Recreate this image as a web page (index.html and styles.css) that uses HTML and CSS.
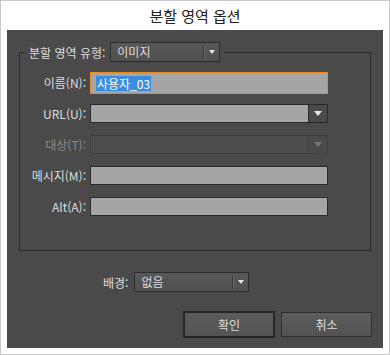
FILE: index.html
```html
<!DOCTYPE html>
<html lang="ko">
<head>
  <meta charset="UTF-8" />
  <meta name="viewport" content="width=device-width, initial-scale=1.0"/>
  <title>분할 영역 옵션</title>
  <link rel="stylesheet" href="styles.css">
</head>

<body>
  <div class="dialog">
    <div class="title">분할 영역 옵션</div>

    <div class="panel">
      <fieldset class="group">
        <legend class="group-legend">
          <span class="legend-label">분할 영역 유형:</span>
          <div class="select select-type">
            <span class="select-value">이미지</span>
            <span class="select-arrow"><span class="tri"></span></span>
          </div>
        </legend>

        <div class="form">
          <label class="label">이름(N):</label>
          <div class="field field-focus"><span class="sel">사용자_03</span></div>

          <label class="label">URL(U):</label>
          <div class="combo">
            <div class="combo-text"></div>
            <div class="combo-btn"><span class="tri tri-big"></span></div>
          </div>

          <label class="label label-off">대상(T):</label>
          <div class="combo combo-off">
            <div class="combo-text"></div>
            <div class="combo-btn"><span class="tri tri-big"></span></div>
          </div>

          <label class="label">메시지(M):</label>
          <div class="field"></div>

          <label class="label">Alt(A):</label>
          <div class="field"></div>
        </div>
      </fieldset>

      <div class="bg-row">
        <span class="label">배경:</span>
        <div class="select select-bg">
          <span class="select-value">없음</span>
          <span class="select-arrow"><span class="tri"></span></span>
        </div>
      </div>

      <div class="buttons">
        <button class="btn btn-default">확인</button>
        <button class="btn">취소</button>
      </div>
    </div>
  </div>
</body>
</html>
```

FILE: styles.css
```css
:root {
  --panel: #4a4a4a;
  --line: #2a2a2a;
  --txt: #dedede;
  --field: #a5a5a5;
  --focus: #e8891c;
  --select: #3b8de0;
}

* { box-sizing: border-box; }

body {
  margin: 0;
  background: #fff;
  font-family: "Noto Sans CJK KR", "Noto Sans", sans-serif;
  font-size: 12px;
}

.dialog {
  width: 390px;
  height: 355px;
  border: 1px solid #c8c8c8;
  padding: 0 6px 6px;
  display: flex;
  flex-direction: column;
}

.title {
  height: 29px;
  line-height: 29px;
  text-align: center;
  font-size: 15px;
  color: #222;
}

.panel {
  flex: 1;
  background: var(--panel);
  display: flex;
  flex-direction: column;
}

.group {
  margin: 12px 12px 0;
  padding: 0;
  border: 1px solid var(--line);
  min-width: 0;
}

.group-legend {
  display: flex;
  align-items: center;
  gap: 5px;
  margin-left: 5px;
  padding: 0 4px;
  color: var(--txt);
}

.form {
  display: grid;
  grid-template-columns: 66px 238px;
  grid-auto-rows: 19px;
  column-gap: 4px;
  row-gap: 12px;
  align-items: center;
  padding: 11px 0 34px;
}

.label {
  text-align: right;
  color: var(--txt);
  line-height: 19px;
  white-space: nowrap;
}

.label-off { color: #8a8a8a; }

.field {
  height: 19px;
  background: var(--field);
  border: 1px solid var(--line);
}

.field-focus {
  height: 22px;
  border-color: var(--focus);
  padding: 2px 0 0 5px;
}

.sel {
  display: inline-block;
  background: var(--select);
  color: #fff;
  line-height: 15px;
  padding: 0 1px;
}

.combo {
  display: flex;
  height: 19px;
  border: 1px solid var(--line);
}

.combo-text {
  flex: 1;
  background: var(--field);
  border-right: 1px solid var(--line);
}

.combo-btn {
  width: 18px;
  background: #4b4b4b;
  display: flex;
  align-items: center;
  justify-content: center;
}

.combo-off { border-color: #3e3e3e; }
.combo-off .combo-text {
  background: #4c4c4c;
  border-right-color: #3e3e3e;
}
.combo-off .tri { border-top-color: #777; }

.select {
  display: flex;
  align-items: center;
  height: 20px;
  background: linear-gradient(#585858, #505050);
  border: 1px solid #2c2c2c;
  color: var(--txt);
}

.select-type { width: 110px; }
.select-bg { width: 115px; }

.select-value {
  flex: 1;
  padding-left: 6px;
  line-height: 18px;
}

.select-arrow {
  width: 16px;
  height: 14px;
  border-left: 1px solid #363636;
  box-shadow: inset 1px 0 #6c6c6c;
  display: flex;
  align-items: center;
  justify-content: center;
  padding-left: 1px;
}

.tri {
  width: 0;
  height: 0;
  border-left: 3px solid transparent;
  border-right: 3px solid transparent;
  border-top: 4px solid #e6e6e6;
}

.tri-big {
  border-left-width: 4px;
  border-right-width: 4px;
  border-top-width: 5px;
}

.bg-row {
  display: flex;
  align-items: center;
  gap: 6px;
  margin-top: 21px;
  padding-left: 96px;
}

.buttons {
  display: flex;
  justify-content: flex-end;
  align-items: center;
  gap: 6px;
  height: 27px;
  margin-top: 19px;
  padding-right: 11px;
}

.btn {
  width: 91px;
  height: 25px;
  padding: 0;
  background: linear-gradient(#5c5c5c, #535353);
  border: 1px solid #2e2e2e;
  color: var(--txt);
  font-family: inherit;
  font-size: 12px;
}

.btn-default {
  width: 92px;
  height: 27px;
  border: 2px solid #262626;
}
```
